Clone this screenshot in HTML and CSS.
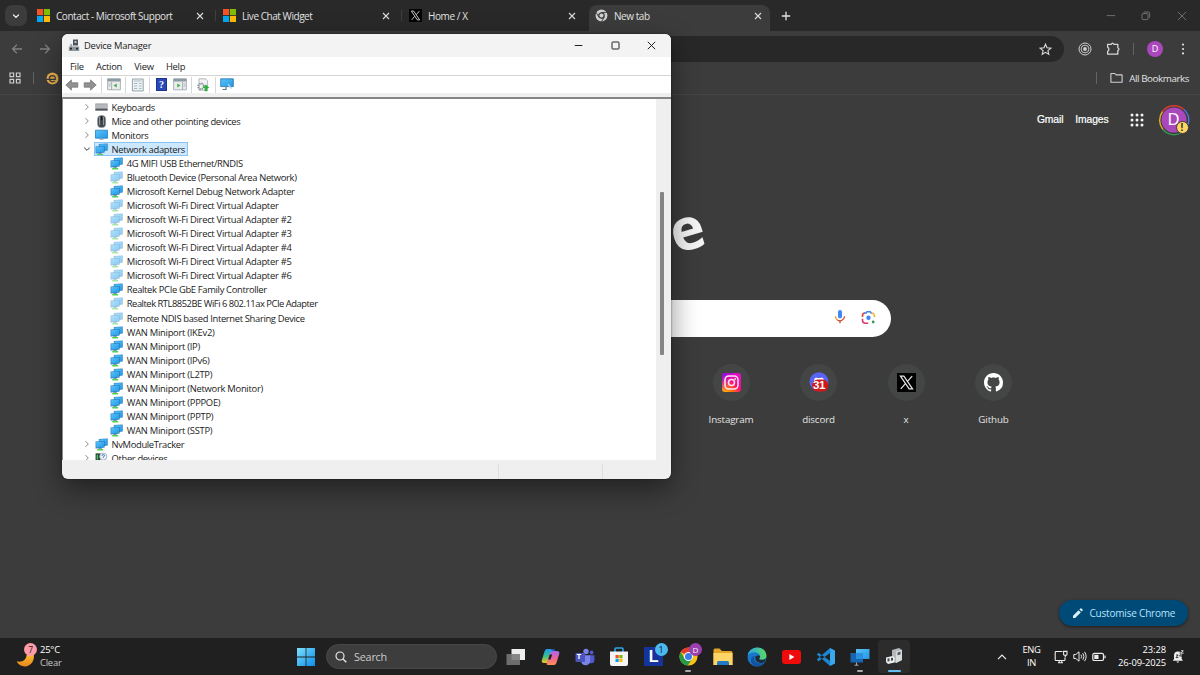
FILE: index.html
```
<!DOCTYPE html>
<html lang="en">
<head>
    <meta charset="UTF-8">
    <meta name="viewport" content="width=device-width, initial-scale=1.0">
    <title>New tab</title>
    <link rel="stylesheet" href="styles.css">
</head>
<body>
    <!-- shared icons -->
    <svg class="defs" width="0" height="0">
        <defs>
            <linearGradient id="screen" x1="0" y1="0" x2="1" y2="1"><stop offset="0" stop-color="#58c4fa"/><stop offset="1" stop-color="#2496e4"/></linearGradient>
            <linearGradient id="insta" x1="0" y1="1" x2="1" y2="0"><stop offset="0" stop-color="#ffd000"/><stop offset=".3" stop-color="#ff6a10"/><stop offset=".55" stop-color="#ff0a7a"/><stop offset="1" stop-color="#e010d8"/></linearGradient>
            <linearGradient id="instaTop" x1="0" y1="0" x2=".6" y2=".6"><stop offset="0" stop-color="#6a10ff"/><stop offset="1" stop-color="#e010d8" stop-opacity="0"/></linearGradient>
            <linearGradient id="win" x1="0" y1="0" x2="1" y2="1"><stop offset="0" stop-color="#7be0fa"/><stop offset="1" stop-color="#0c8ce8"/></linearGradient>
            <linearGradient id="moon" x1="0" y1="0" x2="0" y2="1"><stop offset="0" stop-color="#ffc63a"/><stop offset="1" stop-color="#e8861a"/></linearGradient>
            <linearGradient id="copA" x1="0" y1="0" x2="0" y2="1"><stop offset="0" stop-color="#1e9cf0"/><stop offset=".5" stop-color="#35c08c"/><stop offset="1" stop-color="#f2c51d"/></linearGradient>
            <linearGradient id="copB" x1="0" y1="0" x2="0" y2="1"><stop offset="0" stop-color="#a46af0"/><stop offset=".5" stop-color="#f0609a"/><stop offset="1" stop-color="#ff9350"/></linearGradient>
            <linearGradient id="edgeA" x1="0" y1="0" x2="1" y2="0"><stop offset="0" stop-color="#2aa5e8"/><stop offset="1" stop-color="#5ad862"/></linearGradient>
            <symbol id="net" viewBox="0 0 13 13">
                <path d="M3.800.9 12.700.4v7.200l-8.900.8z" fill="#2b7fc0"/><path d="M4.400 1.500 12.100 1v6l-7.700.7z" fill="url(#screen)"/>
                <path d="M3.400 9.800h3.400v1.400H3.400z" fill="#7f9aa8"/><path d="M2.200 11h6v1.500h-6z" fill="#4fd04e"/>
                <path d="M.6 3.500 9.600 3v6.600l-9 .8z" fill="#2474b8"/><path d="M1.200 4.100 9 3.600V9L1.200 9.700z" fill="url(#screen)"/>
            </symbol>
            <symbol id="ms" viewBox="0 0 13 13"><path fill="#f35325" d="M0 0h6.1v6.1H0z"/><path fill="#81bc06" d="M6.9 0H13v6.1H6.9z"/><path fill="#05a6f0" d="M0 6.9h6.1V13H0z"/><path fill="#ffba08" d="M6.9 6.9H13V13H6.9z"/></symbol>
            <symbol id="xlogo" viewBox="0 0 20 20"><path fill="#000" d="M0 0h20v20H0z"/><path d="M3.600 3.200h3.600l9.200 13.600h-3.600zM16 3.200 11 8.800M8.800 11.200 4 16.800" fill="none" stroke="#e4e4e4" stroke-width="1.300"/></symbol>
            <symbol id="close" viewBox="0 0 8 8"><path d="M1 1l6 6M7 1 1 7" fill="none" stroke="currentColor" stroke-width="1.1"/></symbol>
            <symbol id="gt" viewBox="0 0 8 8"><path d="M2.5 1.2 5.3 4 2.5 6.8" fill="none" stroke="#8a8a8a" stroke-width="1"/></symbol>
        </defs>
    </svg>

    <div class="browser">
        <div class="tab-strip">
            <div class="tab-search"><svg width="8" height="8" viewBox="0 0 8 8"><path d="M1.2 2.6 4 5.4l2.8-2.8" fill="none" stroke="#fff" stroke-width="1.3"/></svg></div>
            <div class="tab"><svg width="13" height="13"><use href="#ms"/></svg><span>Contact - Microsoft Support</span><svg class="x" width="8" height="8"><use href="#close"/></svg></div>
            <div class="tab"><svg width="13" height="13"><use href="#ms"/></svg><span>Live Chat Widget</span><svg class="x" width="8" height="8"><use href="#close"/></svg></div>
            <div class="tab no-line"><svg width="13" height="13"><use href="#xlogo"/></svg><span>Home / X</span><svg class="x" width="8" height="8"><use href="#close"/></svg></div>
            <div class="tab active">
                <svg width="13" height="13" viewBox="0 0 14 14"><circle cx="7" cy="7" r="5" fill="none" stroke="#cfcfcf" stroke-width="2.8"/><circle cx="7" cy="7" r="2.2" fill="#cfcfcf"/><path d="M6.8 3.7h6M4.2 8.8 1.2 3.6M9.9 8.8l-3 5" stroke="#3c3c3c" stroke-width="1" fill="none"/></svg>
                <span>New tab</span><svg class="x" width="8" height="8"><use href="#close"/></svg>
            </div>
            <svg class="plus" width="10" height="10" viewBox="0 0 10 10"><path d="M5 .8v8.4M.8 5h8.4" stroke="#e3e3e3" stroke-width="1.3"/></svg>
            <div class="win-buttons">
                <svg width="10" height="10" viewBox="0 0 10 10"><path d="M.8 4.6h8.4"/></svg>
                <svg width="10" height="10" viewBox="0 0 10 10"><rect x="1" y="2.6" width="6" height="6" rx="1"/><path d="M3 2.4V1.6q0-.6.6-.6h4q1 0 1 1v4q0 .7-.8.7"/></svg>
                <svg width="10" height="10" viewBox="0 0 10 10"><path d="M.9.9l8.2 8.2M9.1.9.9 9.1"/></svg>
            </div>
        </div>

        <div class="toolbar">
            <svg class="nav" width="12" height="12" viewBox="0 0 12 12"><path d="M11 6H1.5M5.8 1.8 1.6 6l4.2 4.2"/></svg>
            <svg class="nav" width="12" height="12" viewBox="0 0 12 12"><path d="M1 6h9.5M6.2 1.8 10.4 6l-4.2 4.2"/></svg>
            <div class="omnibox"><svg width="13" height="13" viewBox="0 0 13 13"><path d="M6.5 1.2 8 4.8l3.9.3-3 2.5.9 3.8-3.3-2-3.3 2 .9-3.8-3-2.5L5 4.8z" fill="none" stroke="#dedede" stroke-width="1.1"/></svg></div>
            <svg class="rings" width="14" height="14" viewBox="0 0 14 14" fill="none" stroke="#d0d0d0"><circle cx="7" cy="7" r="6" stroke-width="1"/><circle cx="7" cy="7" r="3.9" stroke-width=".9"/><circle cx="7" cy="7" r="1.9" fill="#d0d0d0" stroke="none"/></svg>
            <svg class="puzzle" width="14" height="14" viewBox="0 0 14 14"><path d="M1.600 2.400h3.600Q6.600-.1 8 2.400h3.800v3.400q2.300 1.400 0 2.800v3.600H1.600V9.600q2.600-2.300 0-4.600z" fill="none" stroke="#d6d6d6" stroke-width="1.300" stroke-linejoin="round"/></svg>
            <span class="bar"></span>
            <span class="avatar-small">D</span>
            <svg class="dots" width="4" height="14" viewBox="0 0 4 14" fill="#dedede"><circle cx="2" cy="2.6" r="1.1"/><circle cx="2" cy="7" r="1.1"/><circle cx="2" cy="11.4" r="1.1"/></svg>
        </div>

        <div class="bookmarks">
            <svg width="12" height="12" viewBox="0 0 12 12" fill="none" stroke="#cfcfcf" stroke-width="1.2"><path d="M1 1h3.6v3.6H1zM7.4 1H11v3.6H7.4zM1 7.4h3.6V11H1zM7.4 7.4H11V11H7.4z"/></svg>
            <span class="bar"></span>
            <svg width="13" height="13" viewBox="0 0 13 13"><circle cx="6.500" cy="6.500" r="6" fill="#eab24c"/><path d="M0 7.400h9.300q.3-3.600-2.900-3.700-3.100.2-3.100 3.200.4 3 3.200 2.900 1.500 0 2.500-.9" fill="none" stroke="#3c3c3c" stroke-width="1.200"/></svg>
            <span class="bar last"></span>
            <svg width="13" height="12" viewBox="0 0 13 12"><path d="M.9 1.5h3.9l1.3 1.4h6v7.4H.9z" fill="none" stroke="#d0d0d0" stroke-width="1.1" stroke-linejoin="round"/></svg>
            <span class="all">All Bookmarks</span>
        </div>

        <div class="ntp">
            <div class="ntp-links">
                <span>Gmail</span><span>Images</span>
                <svg width="14" height="14" viewBox="0 0 14 14" fill="#f4f4f4"><circle cx="2" cy="2" r="1.5"/><circle cx="7" cy="2" r="1.5"/><circle cx="12" cy="2" r="1.5"/><circle cx="2" cy="7" r="1.5"/><circle cx="7" cy="7" r="1.5"/><circle cx="12" cy="7" r="1.5"/><circle cx="2" cy="12" r="1.5"/><circle cx="7" cy="12" r="1.5"/><circle cx="12" cy="12" r="1.5"/></svg>
                <div class="account">
                    <svg width="32" height="32" viewBox="0 0 32 32"><g fill="none" stroke-width="1.4"><path d="M4.5 7.5A14.6 14.6 0 0 1 26 5.5" stroke="#d93c30"/><path d="M26 5.5a14.6 14.6 0 0 1 4 15" stroke="#4a78d8"/><path d="M23 29A14.6 14.6 0 0 1 4.8 25.3" stroke="#349a50"/><path d="M4.8 25.3a14.6 14.6 0 0 1-.3-17.8" stroke="#e8b21c"/></g><circle cx="16" cy="16" r="12.6" fill="#ab47bc"/></svg>
                    <b>D</b><i>!</i>
                </div>
            </div>
            <div class="logo"><span>e</span></div>
            <div class="search">
                <svg width="12" height="16" viewBox="0 0 12 16"><rect x="4" y="1" width="4" height="8.4" rx="2" fill="#4285f4"/><path d="M1.5 7.3c0 2 1 3.2 2.2 3.8" fill="none" stroke="#f29b2c" stroke-width="1.3"/><path d="M3.4 11c2.8 1.7 7 .2 7.1-3.7" fill="none" stroke="#d94b3c" stroke-width="1.3"/><path d="M6 11.6v2.7" stroke="#a8693f" stroke-width="1.4"/></svg>
                <svg width="15" height="15" viewBox="0 0 15 15" fill="none" stroke-width="1.6"><path d="M1.5 7V5.6Q1.5 3 4 3" stroke="#d9443a"/><path d="M3.4 3h1.8L6 1.7h3.2L10 3h1" stroke="#4285f4"/><path d="M10.5 3q3 0 3 4.2" stroke="#f4b62a"/><path d="M1.5 8.8v1.4q0 3 3 3h2.7" stroke="#d83b6a"/><circle cx="7.5" cy="7.8" r="2.2" fill="#4285f4"/><circle cx="12.2" cy="12" r="1.4" fill="#349a50"/></svg>
            </div>
            <div class="shortcuts">
                <div class="shortcut"><span class="disc"><svg width="19" height="19" viewBox="0 0 19 19"><rect width="19" height="19" rx="3" fill="url(#insta)"/><rect width="19" height="19" rx="3" fill="url(#instaTop)"/><rect x="3" y="3" width="13" height="13" rx="3.8" fill="none" stroke="#ffe4f6" stroke-width="1.5"/><circle cx="9.5" cy="9.5" r="3" fill="none" stroke="#ffe4f6" stroke-width="1.5"/><circle cx="13.2" cy="5.9" r=".9" fill="#ffe4f6"/></svg></span><label>Instagram</label></div>
                <div class="shortcut"><span class="disc"><svg width="20" height="20" viewBox="0 0 20 20"><circle cx="10" cy="9.7" r="9.5" fill="#5865f2"/><path d="M5 9q0-3 2-3.6l1.2.6h3.6l1.2-.6q2 .8 2 3.6z" fill="#fff"/><rect x="3.2" y="7.6" width="16" height="12" rx="5.5" fill="#d01818"/></svg><em>31</em></span><label>discord</label></div>
                <div class="shortcut"><span class="disc"><svg width="19" height="19"><use href="#xlogo"/></svg></span><label>x</label></div>
                <div class="shortcut"><span class="disc"><svg width="19" height="19" viewBox="0 0 16 16"><path fill="#fff" d="M8 0C3.58 0 0 3.58 0 8c0 3.54 2.29 6.53 5.47 7.59.4.07.55-.17.55-.38 0-.19-.01-.82-.01-1.49-2.01.37-2.53-.49-2.69-.94-.09-.23-.48-.94-.82-1.13-.28-.15-.68-.52-.01-.53.63-.01 1.08.58 1.23.82.72 1.21 1.87.87 2.33.66.07-.52.28-.87.51-1.07-1.78-.2-3.64-.89-3.64-3.95 0-.87.31-1.59.82-2.15-.08-.2-.36-1.02.08-2.12 0 0 .67-.21 2.2.82.64-.18 1.32-.27 2-.27s1.36.09 2 .27c1.53-1.04 2.2-.82 2.2-.82.44 1.1.16 1.92.08 2.12.51.56.82 1.27.82 2.15 0 3.07-1.87 3.75-3.65 3.95.29.25.54.73.54 1.48 0 1.07-.01 1.93-.01 2.2 0 .21.15.46.55.38A8 8 0 0 0 16 8c0-4.42-3.58-8-8-8z"/></svg></span><label>Github</label></div>
            </div>
            <div class="customise"><svg width="12" height="12" viewBox="0 0 12 12" fill="#d8efff"><path d="M1 8.8V11h2.2l5.6-5.6-2.2-2.2zM7.4 2.4l1-1q.5-.5 1 0l1.2 1.2q.5.5 0 1l-1 1z"/></svg><span>Customise Chrome</span></div>
        </div>
    </div>

    <div class="window">
        <div class="title-bar">
            <svg width="12" height="13" viewBox="0 0 12 13"><path d="M5 .5h5v6H5z" fill="#4c555c"/><path d="M6.5 2h2v2h-2z" fill="#b9c2c8"/><path d="M.8 7.5h10.4V12H.8z" fill="#8d979e"/><path d="M2.2 5h2v3h-2z" fill="#9aa4aa"/><path d="M2 8.8h2v1.8H2zM8 8.8h2v1.8H8z" fill="#23292e"/></svg>
            <span>Device Manager</span>
            <div class="controls">
                <svg width="9" height="9" viewBox="0 0 9 9"><path d="M.8 4.5h7.6"/></svg>
                <svg width="9" height="9" viewBox="0 0 9 9"><rect x="1" y="1" width="7" height="7" rx=".6"/></svg>
                <svg width="9" height="9" viewBox="0 0 9 9"><path d="M.8.8l7.4 7.4M8.2.8.8 8.2"/></svg>
            </div>
        </div>
        <div class="menu"><span>File</span><span>Action</span><span>View</span><span>Help</span></div>
        <div class="tools">
            <svg width="14" height="12" viewBox="0 0 14 12"><path d="M.8 6 6.4.9v2.9h6.4v4.4H6.4v2.9z" fill="#929292" stroke="#6f6f6f" stroke-width=".7"/></svg>
            <svg class="fwd" width="14" height="12" viewBox="0 0 14 12"><path d="M13.2 6 7.6.9v2.9H1.2v4.4h6.4v2.9z" fill="#929292" stroke="#6f6f6f" stroke-width=".7"/></svg>
            <i></i>
            <svg width="14" height="13" viewBox="0 0 14 13"><path d="M.6.8h12.8v11H.6z" fill="#e9eced" stroke="#9aa3a8" stroke-width=".8"/><path d="M.6.8h12.8v2.6H.6z" fill="#8d9ba5"/><path d="M4.6 4v8M1.5 6h2M1.5 8h2" stroke="#9aa3a8" stroke-width=".8"/><path d="M9.7 5.6v4L6.6 7.6z" fill="#3dab3d"/></svg>
            <i></i>
            <svg width="14" height="14" viewBox="0 0 14 14"><path d="M1.400 1h10.800v12H1.400z" fill="#eef2f4" stroke="#8c989f" stroke-width=".9"/><path d="M3 3h7.600M3 5.500h3.400M3 8h3.400M3 10.500h3.400M8 5.500h2.600M8 8h2.600M8 10.500h2.600" stroke="#a9bdc9" stroke-width="1"/></svg>
            <i></i>
            <div class="help">?</div>
            <svg width="14" height="13" viewBox="0 0 14 13"><path d="M.6.8h12.8v11H.6z" fill="#e9eced" stroke="#9aa3a8" stroke-width=".8"/><path d="M.6.8h12.8v2.6H.6z" fill="#8d9ba5"/><path d="M9.6 4v8M10.5 6h2M10.5 8h2" stroke="#9aa3a8" stroke-width=".8"/><path d="M4.3 5.6v4l3.1-2z" fill="#3dab3d"/></svg>
            <i></i>
            <svg width="14" height="14" viewBox="0 0 14 14"><path d="M3 .8h6.6l2 2v9.4H3z" fill="#f0f2f3" stroke="#a3abb0" stroke-width=".8"/><circle cx="5" cy="8.3" r="2.8" fill="none" stroke="#8c9499" stroke-width="1.8" stroke-dasharray="1.5 .7"/><path d="M10 6.4 13.4 10h-2v3.2H8.6V10h-2z" fill="#2fb23b"/></svg>
            <i></i>
            <svg width="14" height="13" viewBox="0 0 14 13"><path d="M.7.8h12.6v7.8H.7z" fill="url(#screen)" stroke="#2775ac" stroke-width=".8"/><path d="M2.500 11.500h3.500V9" fill="none" stroke="#5d7482" stroke-width="1.200"/><path d="m8 6 3.400 4.500" stroke="#a8d3ea" stroke-width="1.300"/></svg>
        </div>
        <div class="pane">
            <div class="tree">
                <div class="row"><svg class="arrow" width="8" height="8"><use href="#gt"/></svg><svg class="icon" width="13" height="12" viewBox="0 0 13 12"><path d="M.4 2.5h12.2v7H.4z" fill="#8d9094"/><path d="M1 3.2h11v3.9H1z" fill="#b6babe"/><path d="M.4 8h12.2v1.6H.4z" fill="#53575b"/></svg>Keyboards</div>
                <div class="row"><svg class="arrow" width="8" height="8"><use href="#gt"/></svg><svg class="icon" width="13" height="13" viewBox="0 0 13 13"><rect x="2.6" y=".6" width="8" height="12" rx="3.5" fill="#41464b" stroke="#8f969b" stroke-width=".7"/><path d="M4.6 2v8M8.6 2v8" stroke="#a4acb2" stroke-width=".9"/><path d="M6.6 1.2v4" stroke="#16191c" stroke-width="1.2"/></svg>Mice and other pointing devices</div>
                <div class="row"><svg class="arrow" width="8" height="8"><use href="#gt"/></svg><svg class="icon" width="13" height="12" viewBox="0 0 13 12"><path d="M.5 1.2h12v8H.5z" fill="url(#screen)" stroke="#2380c0" stroke-width=".8"/><path d="M4.5 10.2h4" stroke="#8599a5"/></svg>Monitors</div>
                <div class="row"><svg class="arrow" width="8" height="8" viewBox="0 0 8 8"><path d="M1.2 2.6 4 5.4l2.8-2.8" fill="none" stroke="#333"/></svg><span class="selected"><svg class="icon" width="13" height="13"><use href="#net"/></svg>Network adapters</span></div>
                <div class="row child"><svg class="icon" width="13" height="13"><use href="#net"/></svg>4G MIFI USB Ethernet/RNDIS</div>
                <div class="row child off"><svg class="icon" width="13" height="13"><use href="#net"/></svg>Bluetooth Device (Personal Area Network)</div>
                <div class="row child"><svg class="icon" width="13" height="13"><use href="#net"/></svg>Microsoft Kernel Debug Network Adapter</div>
                <div class="row child off wifi"><svg class="icon" width="13" height="13"><use href="#net"/></svg>Microsoft Wi-Fi Direct Virtual Adapter</div>
                <div class="row child off wifi"><svg class="icon" width="13" height="13"><use href="#net"/></svg>Microsoft Wi-Fi Direct Virtual Adapter #2</div>
                <div class="row child off wifi"><svg class="icon" width="13" height="13"><use href="#net"/></svg>Microsoft Wi-Fi Direct Virtual Adapter #3</div>
                <div class="row child off wifi"><svg class="icon" width="13" height="13"><use href="#net"/></svg>Microsoft Wi-Fi Direct Virtual Adapter #4</div>
                <div class="row child off wifi"><svg class="icon" width="13" height="13"><use href="#net"/></svg>Microsoft Wi-Fi Direct Virtual Adapter #5</div>
                <div class="row child off wifi"><svg class="icon" width="13" height="13"><use href="#net"/></svg>Microsoft Wi-Fi Direct Virtual Adapter #6</div>
                <div class="row child"><svg class="icon" width="13" height="13"><use href="#net"/></svg>Realtek PCIe GbE Family Controller</div>
                <div class="row child off tight"><svg class="icon" width="13" height="13"><use href="#net"/></svg>Realtek RTL8852BE WiFi 6 802.11ax PCIe Adapter</div>
                <div class="row child off"><svg class="icon" width="13" height="13"><use href="#net"/></svg>Remote NDIS based Internet Sharing Device</div>
                <div class="row child wan"><svg class="icon" width="13" height="13"><use href="#net"/></svg>WAN Miniport (IKEv2)</div>
                <div class="row child wan"><svg class="icon" width="13" height="13"><use href="#net"/></svg>WAN Miniport (IP)</div>
                <div class="row child wan"><svg class="icon" width="13" height="13"><use href="#net"/></svg>WAN Miniport (IPv6)</div>
                <div class="row child wan"><svg class="icon" width="13" height="13"><use href="#net"/></svg>WAN Miniport (L2TP)</div>
                <div class="row child wan"><svg class="icon" width="13" height="13"><use href="#net"/></svg>WAN Miniport (Network Monitor)</div>
                <div class="row child wan"><svg class="icon" width="13" height="13"><use href="#net"/></svg>WAN Miniport (PPPOE)</div>
                <div class="row child wan"><svg class="icon" width="13" height="13"><use href="#net"/></svg>WAN Miniport (PPTP)</div>
                <div class="row child wan"><svg class="icon" width="13" height="13"><use href="#net"/></svg>WAN Miniport (SSTP)</div>
                <div class="row"><svg class="arrow" width="8" height="8"><use href="#gt"/></svg><svg class="icon" width="13" height="13"><use href="#net"/></svg>NvModuleTracker</div>
                <div class="row"><svg class="arrow" width="8" height="8"><use href="#gt"/></svg><svg class="icon" width="13" height="13" viewBox="0 0 13 13"><path d="M.6 1.4h5v10h-5z" fill="#23362c"/><path d="M1.6 2.6h1.6v5H1.6z" fill="#4fbf6a"/><circle cx="8.2" cy="4.6" r="3.6" fill="#e8f1f8" stroke="#93a6b5" stroke-width=".8"/><path d="M7 3.8q.2-1.2 1.3-1.2t1.2 1q0 .7-1.2 1.4v.8" fill="none" stroke="#2a64a8" stroke-width=".9"/></svg>Other devices</div>
            </div>
            <div class="scroll"><div class="thumb"></div></div>
        </div>
        <div class="status"><span></span><span></span></div>
    </div>

    <div class="taskbar">
        <div class="weather">
            <svg width="20" height="24" viewBox="0 0 20 24"><path d="M17 7c2.500 5.500 0 12.500-6 14.200C6.500 22.400 2.500 20.200.7 16.300c5 1.400 9.600-1 9.800-6z" fill="url(#moon)"/></svg>
            <span class="count">7</span>
            <div><p>25°C</p><p class="dim">Clear</p></div>
        </div>
        <svg class="start" width="18" height="18" viewBox="0 0 18 18"><path fill="url(#win)" d="M0 0h8.600v8.600H0zM9.400 0H18v8.600H9.400zM0 9.400h8.600V18H0zM9.400 9.400H18V18H9.400z"/></svg>
        <div class="task-search"><svg width="12" height="12" viewBox="0 0 12 12"><circle cx="5" cy="5" r="4" fill="none" stroke="#e6e6e6" stroke-width="1.200"/><path d="m8 8 3.300 3.300" stroke="#e6e6e6" stroke-width="1.400"/></svg><span>Search</span></div>
        <div class="apps">
            <div class="app"><svg width="20" height="18" viewBox="0 0 20 18"><path d="M5.500 1H19v11H5.500z" fill="#eee"/><path d="M.5 6H14v11H.5z" fill="#777" opacity=".88"/></svg></div>
            <div class="app"><svg width="19" height="18" viewBox="0 0 19 18"><path d="M6 1h6q2 0 1.300 2L10 12.500q-.8 2.500-2.800 2.500H3Q0 15 .9 12L3.600 3.200Q4.200 1 6 1z" fill="url(#copA)"/><path d="M13 17H7q-2 0-1.300-2L9 5.500Q9.800 3 11.800 3H16q3 0 2.200 3L15.400 15q-.6 2-2.400 2z" fill="url(#copB)"/><path d="M8.700 6.500h2.500l-1.600 5H7.200z" fill="#202020"/><path d="M9.500 1H12q1.300 0 1.700 2h-2.500z" fill="#2459c4"/></svg></div>
            <div class="app"><svg width="20" height="18" viewBox="0 0 20 18"><circle cx="11" cy="3.500" r="2.700" fill="#7b83eb"/><circle cx="16.600" cy="4.500" r="1.900" fill="#5059c9"/><path d="M14 7.200h5.400v5q0 3-3 3H14z" fill="#5059c9"/><path d="M6 7.200h9.200v5.500a4.600 4.600 0 0 1-9.200 0z" fill="#7b83eb"/><rect x=".5" y="5" width="9.500" height="9" rx="1" fill="#4b53bc"/></svg><b class="t">T</b></div>
            <div class="app"><svg width="20" height="20" viewBox="0 0 20 20"><path d="M6 5V2q0-1 1-1h6q1 0 1 1v3" fill="none" stroke="#2aa6e4" stroke-width="1.600"/><path d="M1 4.500h18V17q0 2-2 2H3q-2 0-2-2z" fill="#f4f4f4"/><path d="M6.500 8h3.200v3.200H6.500z" fill="#f25022"/><path d="M10.300 8h3.200v3.200h-3.200z" fill="#7fba00"/><path d="M6.500 11.800h3.200V15H6.500z" fill="#00a4ef"/><path d="M10.300 11.800h3.200V15h-3.200z" fill="#ffb900"/></svg></div>
            <div class="app"><span class="l-app">L</span><span class="badge blue">1</span></div>
            <div class="app"><svg width="19" height="19" viewBox="0 0 20 20"><circle cx="10" cy="10" r="9.500" fill="#fbc116"/><path d="M10 10 1.800 5.200A9.500 9.500 0 0 1 18.300 5.300H10z" fill="#e33b2e"/><path d="M10 10 5.900 12.300 1.800 5.200A9.500 9.500 0 0 0 9.200 19.500L14 12.300z" fill="#269a46"/><circle cx="10" cy="10" r="4.700" fill="#fff"/><circle cx="10" cy="10" r="3.700" fill="#3a7de8"/></svg><span class="badge purple">D</span><u></u></div>
            <div class="app"><svg width="20" height="18" viewBox="0 0 20 18"><path d="M.5 2q0-1.500 1.500-1.500h4.500L9 3h9q1.500 0 1.500 1.500V17H.5z" fill="#e5a526"/><path d="M.5 5h19v12H.5z" fill="#ffd568"/><path d="M4 17v-2.500q0-1.500 1.500-1.500h9q1.500 0 1.500 1.500V17z" fill="#1f7bc4"/></svg></div>
            <div class="app"><svg width="20" height="20" viewBox="0 0 20 20"><circle cx="10" cy="10" r="9.500" fill="#1877c9"/><path d="M.7 8.500C2-1.500 18-2.500 19.400 8c.5 4.200-3.600 5.700-6.800 4.400-1.300-.6.600-1.200.4-3.400C12 4.500 4 4 .7 8.500z" fill="url(#edgeA)"/><path d="M7.500 9C5.500 14.500 10.500 18 17.500 15.600 13 21.500 5 20 4 14c-.4-3 1.500-5 3.500-5z" fill="#1253a0"/><path d="M12.600 12.400c1.500.7 4.500.6 6-.8l-.9 3.500c-6 2.500-10.500-1.500-9.200-5.500 1.500-1.800 4-1 4.500-.6.200 2.200-1.500 2.600-.4 3.400z" fill="#202a33"/></svg></div>
            <div class="app"><svg width="19" height="14" viewBox="0 0 19 14"><rect width="19" height="14" rx="3" fill="#f00b0b"/><path d="M7.400 4v6l5-3z" fill="#fff"/></svg></div>
            <div class="app"><svg width="20" height="20" viewBox="0 0 20 20"><path d="M14 1v18l5-2.400V3.400z" fill="#3ba7ef"/><path d="M14 1 .8 12.500l1.700 1.700L14.500 5.700zM14 19 .8 7.500l1.700-1.700 12 8.500z" fill="#1c86d1"/></svg></div>
            <div class="app"><svg width="20" height="18" viewBox="0 0 20 18"><path d="M6 1h13.500v10H6z" fill="url(#screen)"/><path d="M.5 5H13v9.500H.5z" fill="#1565b3"/><path d="M6 5h7v6H6z" fill="#2a8fdc"/><path d="M6.500 14.500V17M4.500 17.200h4" stroke="#aaa"/></svg><u></u></div>
            <div class="app current"><svg width="20" height="20" viewBox="0 0 20 20"><path d="m8 3 7-2 3 2v10l-6 3-4-2z" fill="#b4b8ba"/><path d="m12 4.500 6-1.500v10l-6 3z" fill="#d9dcdd"/><path d="m13.500 5.500 3-.9v2.800l-3 .9z" fill="#565b5e"/><path d="M2 10.500 8.500 9l2 1.500v5L4 17l-2-2z" fill="#eceeee"/><path d="m3.500 11.500 2-.3v3l-2 .2zM7 11l2-.3v2.800l-2 .3z" fill="#454a4e"/></svg><u></u></div>
        </div>
        <div class="tray">
            <svg width="10" height="8" viewBox="0 0 10 8"><path d="M1 6.200 5 2.200l4 4" fill="none" stroke="#eee" stroke-width="1.200"/></svg>
            <div class="lang"><p>ENG</p><p>IN</p></div>
            <svg width="14" height="14" viewBox="0 0 14 14" fill="none" stroke="#eee" stroke-width="1.100"><path d="M8.500 1.500H2q-.8 0-.8.800v7.400q0 .8.800.8h8.200q.8 0 .8-.8V7.500M4 12.700h5M5.200 10.500v2M7.800 10.500v2"/><path d="M9.600 1.400H13v2.800q0 1-1 1h-1.400q-1 0-1-1zM11.300 5.200v2"/></svg>
            <svg width="14" height="13" viewBox="0 0 14 13" fill="none" stroke="#eee" stroke-width="1"><path d="M.8 4.500h2L6 1.800v9.400L2.800 8.500h-2zM8 4.700q1.200 1.800 0 3.600M9.800 3.200q2.400 3.300 0 6.600M11.500 1.800q3.300 4.700 0 9.400"/></svg>
            <svg width="14" height="10" viewBox="0 0 14 10"><rect x=".8" y="1.300" width="10.700" height="7.200" rx="1.600" fill="none" stroke="#eee" stroke-width="1.200"/><path d="M2.300 2.800h4.200V7H2.300z" fill="#eee"/><path d="M13 3.500v2.800" stroke="#eee" stroke-width="1.200"/></svg>
            <div class="clock"><p>23:28</p><p>26-09-2025</p></div>
            <svg width="12" height="14" viewBox="0 0 12 14"><path d="M2 9V5.500Q2 1.500 6 1.500T9.700 5v4l1.300 1.800H.8z" fill="#eee"/><path d="M4.300 11.500h3l-1.500 1.400z" fill="#eee"/><path d="M4 5h2.200L4 7.600h2.400M7.500 3.200H10L7.500 6h2.700" fill="none" stroke="#202020" stroke-width=".9"/><path d="M9 .8h2.300L9 3.200h2.500" fill="none" stroke="#eee" stroke-width=".9"/></svg>
        </div>
    </div>
</body>
</html>
```
FILE: styles.css
```
*{margin:0;padding:0;box-sizing:border-box;}
body {width:1200px;height:675px;overflow:hidden;position:relative;display:flex;flex-direction:column;background:#3c3c3c;font-family:"Open Sans","Noto Sans",sans-serif;font-size:9.4px;color:#e3e3e3;white-space:nowrap}
svg{display:block;flex:none}
.defs{position:absolute}

/* browser */
.browser{height:638px;display:flex;flex-direction:column;background:#3c3c3c}
.tab-strip{height:31px;flex:none;display:flex;align-items:center;background:#292929}
.tab-search{width:22px;height:21px;margin:0 4px 0 5px;border-radius:7px;background:#3c3c3c;display:flex;align-items:center;justify-content:center}
.tab{width:186px;height:26px;margin-top:5px;padding:0 13px 5px 6px;display:flex;align-items:center;gap:6px;font-size:10px;letter-spacing:-.45px;background:linear-gradient(#3f3f3f,#3f3f3f) 184px 5px/1px 11px no-repeat}
.tab .x{margin-left:auto;color:#ddd}
.tab.no-line{background:none;letter-spacing:-.4px}
.tab.active{width:181px;padding-right:8.500px;border-radius:8px 8px 0 0;background:#3c3c3c}
.plus{margin-left:11px}
.win-buttons{margin-left:auto;padding-right:13.500px;display:flex;gap:25.500px}
.win-buttons svg{fill:none;stroke:#777;stroke-width:.9}
.toolbar{height:36px;flex:none;display:flex;align-items:center;padding-left:11px}
.nav{margin-right:16px;fill:none;stroke:#808080;stroke-width:1.3}
.omnibox{width:997px;height:26px;border-radius:13px;background:#282828;display:flex;align-items:center;justify-content:flex-end;padding-right:12px}
.rings{margin-left:14px}
.puzzle{margin-left:14px}
.bar{width:1px;height:12px;background:#636363}
.toolbar .bar{margin:0 13px 0 13px}
.avatar-small{width:16px;height:16px;border-radius:50%;background:#ab47bc;color:#fff;font-size:9px;line-height:16px;text-align:center}
.dots{margin-left:18px}
.bookmarks{height:28px;flex:none;border-bottom:1px solid #464646;display:flex;align-items:center;padding:0 11px 5px 9px}
.bookmarks .bar{margin:0 12px}
.bookmarks .last{margin-left:auto;margin-right:13px}
.all{margin-left:6px;font-size:9.800px;letter-spacing:-.42px}

/* new tab page */
.ntp{flex:1;display:flex;flex-direction:column;align-items:center}
.ntp-links{align-self:stretch;height:50px;flex:none;display:flex;align-items:center;justify-content:flex-end;padding:0 10.500px 1px 0;font-family:"Liberation Sans",Arial,sans-serif;font-size:10.3px;color:#fff}
.ntp-links span{margin-right:12px;-webkit-text-stroke:.2px #fff;letter-spacing:-.1px}
.ntp-links span + span{margin-right:21px}
.account{position:relative;width:32px;height:32px;margin-left:14px}
.account b{position:absolute;inset:0;line-height:32px;text-align:center;font-size:16px;font-weight:400}
.account i{position:absolute;right:1px;bottom:2px;width:13px;height:13px;border-radius:50%;background:#fdd663;border:1px solid #3c3c3c;color:#222;font:bold 10px/11px "Liberation Sans",sans-serif;text-align:center}
.logo{width:213px;height:154.500px;display:flex;align-items:center;justify-content:flex-end;color:#f4f4f4;font-family:"Open Sans",sans-serif;font-weight:700;font-size:58px}
.logo span{transform:translate(-3px,5px) rotate(-17deg)}
.search{width:582px;height:37px;flex:none;border-radius:19px;background:#fff;display:flex;align-items:center;justify-content:flex-end;gap:15px;padding:0 15px 2px 0}
.shortcuts{width:874.500px;margin-top:27px;display:flex;justify-content:flex-end}
.shortcut{width:87.5px;display:flex;flex-direction:column;align-items:center;gap:12.500px;font-size:9.8px;letter-spacing:-.14px}
.disc{position:relative;width:37px;height:37px;border-radius:50%;background:#444545;display:flex;align-items:center;justify-content:center}
.disc em{position:absolute;left:13px;top:15px;color:#fff;font:bold 11.500px/13px "Liberation Sans",sans-serif;letter-spacing:-.3px}
.customise{width:129px;height:26px;margin:auto 12px 12px auto;border-radius:13px;background:#004a77;box-shadow:0 1px 3px rgba(0,0,0,.5);color:#b8e2ff;display:flex;align-items:center;gap:6px;padding-left:12.500px;font-size:10px;letter-spacing:-.2px}

/* device manager */
.window{position:absolute;left:62px;top:34px;width:608.500px;height:445px;border-radius:6px;overflow:hidden;background:#efefef;color:#222;display:flex;flex-direction:column;box-shadow:0 10px 28px rgba(0,0,0,.45),0 0 2px rgba(0,0,0,.6)}
.title-bar{height:23px;flex:none;background:#f3f3f3;display:flex;align-items:center;padding:0 14.500px 0 6px;gap:4px;letter-spacing:-.2px}
.controls{margin-left:auto;display:flex;gap:27.500px}
.controls svg{fill:none;stroke:#222;stroke-width:1}
.menu{height:19px;flex:none;background:#fff;border-bottom:1px solid #d4d4d4;display:flex;align-items:center;padding-left:8px;gap:12.200px;letter-spacing:-.25px}
.tools{height:17px;flex:none;background:#fff;display:flex;align-items:center;padding-left:3px}
.tools i{width:1px;height:16px;margin:0 4px;background:#d8d8d8}
.tools .fwd{margin-left:4px}
.tools i + svg{margin:0 .5px 0 .5px}
.help{width:11px;height:13px;margin:0 5.500px 0 2px;background:#2848b8;border:1px solid #1c348c;color:#fff;font:bold 10px/11px "Liberation Serif",serif;text-align:center}
.pane{height:363px;flex:none;margin-top:4px;border-top:2px solid #858585;border-left:1px solid #8a8a8a;display:flex;overflow:hidden}
.tree{width:593px;background:#fff;padding-top:1.300px}
.row{height:14.060px;display:flex;align-items:center;padding-left:20px;letter-spacing:-.33px}
.wan,.wifi{letter-spacing:-.27px}
.tight{letter-spacing:-.48px}
.row .arrow{margin-right:4px}
.icon{margin-right:3.500px}
.child{padding-left:47.300px}
.off .icon{opacity:.5}
.selected{height:14px;margin-left:-1.500px;padding:0 3px 0 1.500px;background:#cce8ff;outline:1px solid #8ac4f2;outline-offset:-1px;display:flex;align-items:center}
.scroll{width:15px;padding:93px 0 0 4px;background:#efefef}
.thumb{width:4px;height:163px;background:#858585;border-radius:1px}
.status{flex:1;display:flex;justify-content:flex-end;padding-top:4px}
.status span{width:104px;border-left:1px solid #dedede}
.status span:last-child{width:68.500px}

/* taskbar */
.taskbar{height:37px;display:flex;align-items:center;background:#202020;font-size:9.4px;color:#fff}
.taskbar p{line-height:12.500px}
.weather{position:relative;width:296px;padding-left:16px;display:flex;align-items:center;gap:4px;letter-spacing:-.2px}
.weather .dim{color:#c8c8c8}
.count{position:absolute;left:24px;top:-1px;width:13px;height:13px;border-radius:50%;background:#ff9aa8;color:#222;font-size:8.500px;line-height:13px;text-align:center}
.start{margin:0 11px 0 1px}
.task-search{width:171px;height:25px;border-radius:13px;background:#3d3d3d;border:1px solid #484848;display:flex;align-items:center;gap:7px;padding-left:8px;color:#ccc;font-size:10.800px;letter-spacing:-.2px}
.apps{display:flex;margin-left:2px}
.app{position:relative;width:34.400px;height:33px;display:flex;align-items:center;justify-content:center}
.current{background:#2c2c2c;border-radius:4px;width:32px;margin-left:1px}
.app u{position:absolute;left:14px;bottom:1px;width:6px;height:2px;border-radius:1px;background:#aaa}
.current u{left:10px;width:13px;background:#62bdf0}
.t{position:absolute;left:9px;top:10px;font-size:7.500px;line-height:12px}
.l-app{width:19px;height:19px;background:#14349c;font:bold 16px/19px "Liberation Sans",sans-serif;text-align:center}
.badge{position:absolute;left:18px;top:3px;width:13px;height:13px;border-radius:50%;font-size:9px;line-height:13px;text-align:center}
.blue{background:#4cb8f0;color:#111}
.purple{background:#9c3fae;color:#eee;font-size:8px}
.tray{margin-left:auto;padding-right:16px;display:flex;align-items:center}
.lang{width:30px;margin:0 7px 0 10px;text-align:center;letter-spacing:-.3px}
.tray svg + svg{margin-left:5px}
.clock{width:55px;margin:0 6px 0 5.500px;text-align:right;letter-spacing:-.1px}
```
